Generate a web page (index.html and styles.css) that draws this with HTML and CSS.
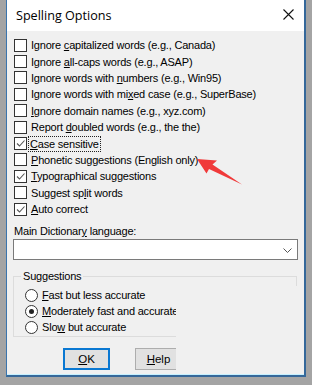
FILE: index.html
```html
<!DOCTYPE html>
<html lang="en">

<head>
  <meta charset="UTF-8">
  <title>Spelling Options</title>
  <link rel="stylesheet" href="styles.css">
</head>

<body>
  <div class="dialog">
    <div class="titlebar">
      <span class="title">Spelling Options</span>
      <svg class="close" width="11" height="11" viewBox="0 0 11 11">
        <path d="M0.5 0.5 L10.5 10.5 M10.5 0.5 L0.5 10.5" stroke="#111" stroke-width="1.1" fill="none"/>
      </svg>
    </div>

    <div class="panel">
      <div class="checks">
        <div class="row"><span class="box"></span><span class="text">Ignore <u>c</u>apitalized words (e.g., Canada)</span></div>
        <div class="row"><span class="box"></span><span class="text">Ignore <u>a</u>ll-caps words (e.g., ASAP)</span></div>
        <div class="row"><span class="box"></span><span class="text">Ignore words with <u>n</u>umbers (e.g., Win95)</span></div>
        <div class="row"><span class="box"></span><span class="text">Ignore words with mi<u>x</u>ed case (e.g., SuperBase)</span></div>
        <div class="row"><span class="box"></span><span class="text"><u>I</u>gnore domain names (e.g., xyz.com)</span></div>
        <div class="row"><span class="box"></span><span class="text">Report <u>d</u>oubled words (e.g., the the)</span></div>
        <div class="row"><span class="box checked"><svg viewBox="0 0 11 11"><path d="M2 5.5 L4.5 8 L9.5 2.5" stroke="#555" stroke-width="1.1" fill="none"/></svg></span><span class="text focus"><u>C</u>ase sensitive</span></div>
        <div class="row"><span class="box"></span><span class="text"><u>P</u>honetic suggestions (English only)</span></div>
        <div class="row"><span class="box checked"><svg viewBox="0 0 11 11"><path d="M2 5.5 L4.5 8 L9.5 2.5" stroke="#555" stroke-width="1.1" fill="none"/></svg></span><span class="text"><u>T</u>ypographical suggestions</span></div>
        <div class="row"><span class="box"></span><span class="text">Suggest sp<u>l</u>it words</span></div>
        <div class="row"><span class="box checked"><svg viewBox="0 0 11 11"><path d="M2 5.5 L4.5 8 L9.5 2.5" stroke="#555" stroke-width="1.1" fill="none"/></svg></span><span class="text"><u>A</u>uto correct</span></div>
      </div>

      <div class="field-label">Main Dictionar<u>y</u> language:</div>
      <div class="select">
        <svg class="chevron" width="9" height="5" viewBox="0 0 9 5">
          <path d="M0.5 0.5 L4.5 4.5 L8.5 0.5" stroke="#555" stroke-width="1" fill="none"/>
        </svg>
      </div>

      <fieldset class="group">
        <legend>Suggestions</legend>
        <div class="row radio-row"><span class="radio"></span><span class="text"><u>F</u>ast but less accurate</span></div>
        <div class="row radio-row"><span class="radio selected"></span><span class="text"><u>M</u>oderately fast and accurate</span></div>
        <div class="row radio-row"><span class="radio"></span><span class="text">Slo<u>w</u> but accurate</span></div>
      </fieldset>

      <div class="buttons">
        <button class="btn default"><u>O</u>K</button>
        <button class="btn"><u>H</u>elp</button>
      </div>

      <!-- stale repaint area from the screenshot -->
      <div class="repaint"></div>
    </div>

    <svg class="arrow" width="300" height="377" viewBox="6 0 300 377">
      <polygon points="197,159 217,160.5 212.5,164.5 242,184.5 209,169 206.5,173.5" fill="#f03a3a"/>
    </svg>
  </div>
</body>

</html>
```

FILE: styles.css
```css
body {
  margin: 0;
  padding: 0;
  background-color: #a4a4a4;
  width: 312px;
  height: 385px;
  overflow: hidden;
}

.dialog {
  position: relative;
  margin-left: 6px;
  width: 297px;
  border-left: 1px solid #3a74ad;
  border-right: 2px solid #35689a;
  border-bottom: 2px solid #35689a;
  font-family: "Liberation Sans", Arial, sans-serif;
  font-size: 11px;
  letter-spacing: -0.2px;
  color: #000;
}

.titlebar {
  height: 31px;
  background-color: #fff;
  display: flex;
  align-items: center;
  justify-content: space-between;
  padding: 0 10px 0 9px;
}

.title {
  font-family: "Open Sans", "Noto Sans", sans-serif;
  font-size: 12.6px;
  letter-spacing: 0;
  margin-top: -1px;
}

.close {
  margin-top: -2px;
}

.panel {
  position: relative;
  height: 344px;
  background-color: #f0f0f0;
  box-shadow: inset 0 -1px 0 #c6f0ff;
  padding: 6px 0 0 7px;
  box-sizing: border-box;
}

.row {
  display: flex;
  align-items: center;
  height: 16.4px;
  line-height: 14px;
  white-space: nowrap;
}

.box {
  width: 11px;
  height: 11px;
  border: 1px solid #333;
  background-color: #fff;
  margin-right: 4px;
  flex-shrink: 0;
}

.box svg {
  display: block;
  width: 11px;
  height: 11px;
}

.text u {
  text-underline-offset: 1px;
}

.focus {
  outline: 1px dotted #222;
  outline-offset: 0;
  padding: 0 1px;
  margin-left: -2px;
}

.field-label {
  margin-top: 7px;
  height: 15px;
  line-height: 15px;
}

.select {
  height: 19px;
  border: 1px solid #7a7a7a;
  background-color: #fff;
  margin-left: -1px;
  display: flex;
  align-items: center;
  justify-content: flex-end;
  padding-right: 5px;
  box-sizing: content-box;
  width: 278px;
}

.chevron {
  margin-top: 1px;
}

.group {
  margin: 8px 0 0 -1px;
  width: 284px;
  box-sizing: border-box;
  border: 1px solid #dcdcdc;
  padding: 3px 0 0 7px;
  height: 69px;
}

.group legend {
  padding: 0 2px;
  line-height: 16px;
}

.radio-row {
  margin-left: 4px;
  height: 16px;
}

.radio {
  width: 11px;
  height: 11px;
  border: 1px solid #333;
  border-radius: 50%;
  background-color: #fff;
  margin-right: 4px;
  flex-shrink: 0;
  position: relative;
}

.radio.selected::after {
  content: "";
  position: absolute;
  left: 3px;
  top: 3px;
  width: 5px;
  height: 5px;
  border-radius: 50%;
  background-color: #222;
}

.buttons {
  display: flex;
  gap: 25px;
  margin: 11px 0 0 49px;
}

.btn {
  width: 47px;
  height: 22px;
  background-color: #e1e1e1;
  border: 1px solid #adadad;
  font-family: inherit;
  font-size: 11.5px;
  color: #000;
  padding: 0;
}

.btn.default {
  border: 2px solid #0a78d2;
}

.repaint {
  position: absolute;
  left: 169px;
  top: 255px;
  width: 128px;
  height: 87px;
  background-color: #f0f0f0;
}

.arrow {
  position: absolute;
  left: -1px;
  top: 0;
}
```
